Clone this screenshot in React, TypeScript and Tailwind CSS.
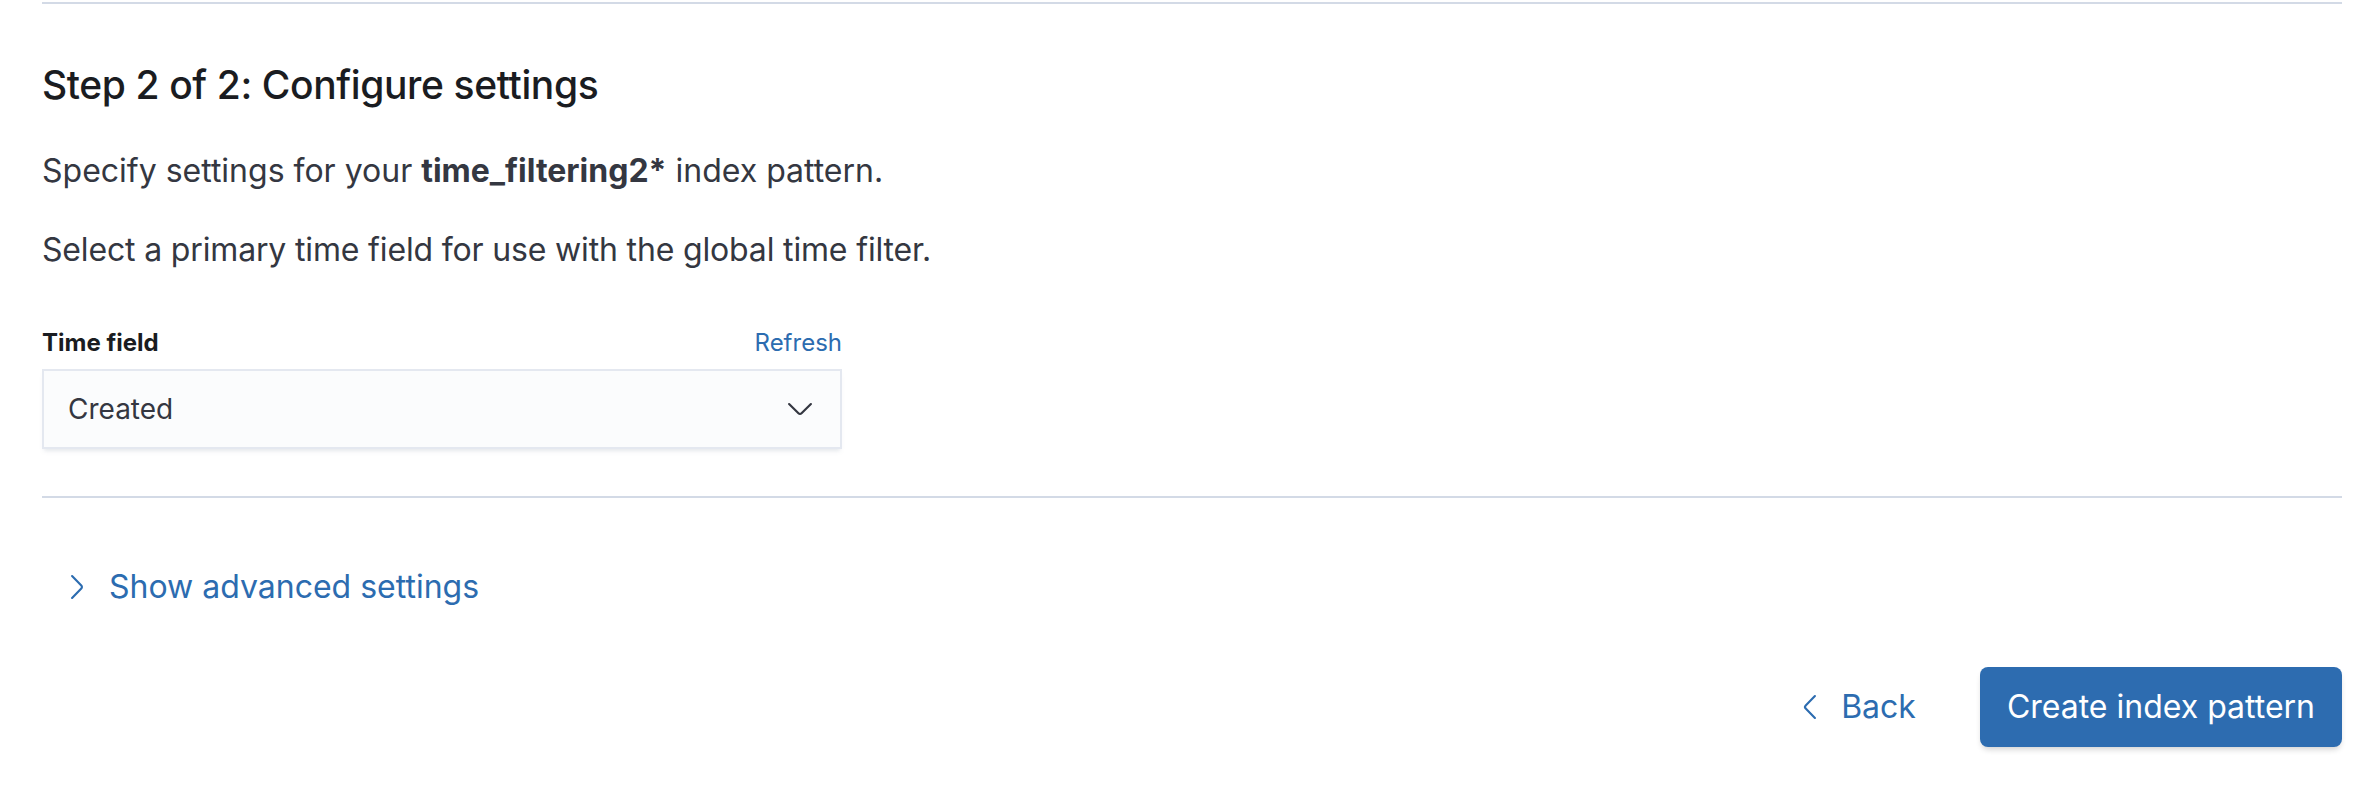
import React from "react";

function ArrowDown({ className }: { className?: string }) {
  return (
    <svg viewBox="0 0 16 16" className={className} fill="currentColor">
      <path d="M13.069 5.157L8.384 9.768a.546.546 0 01-.768 0L2.93 5.158a.552.552 0 00-.771 0 .53.53 0 000 .759l4.684 4.61c.641.631 1.672.63 2.312 0l4.684-4.61a.53.53 0 000-.76.552.552 0 00-.771 0z" />
    </svg>
  );
}

function ArrowRight({ className }: { className?: string }) {
  return (
    <svg viewBox="0 0 16 16" className={className} fill="currentColor">
      <path d="M5.157 13.069l4.611-4.685a.546.546 0 000-.768L5.158 2.93a.552.552 0 010-.771.53.53 0 01.759 0l4.61 4.684c.631.641.63 1.672 0 2.312l-4.61 4.684a.53.53 0 01-.76 0 .552.552 0 010-.771z" />
    </svg>
  );
}

function ArrowLeft({ className }: { className?: string }) {
  return (
    <svg viewBox="0 0 16 16" className={className} fill="currentColor">
      <path d="M10.843 13.069L6.232 8.384a.546.546 0 010-.768l4.61-4.685a.552.552 0 000-.771.53.53 0 00-.759 0l-4.61 4.684a1.65 1.65 0 000 2.312l4.61 4.684a.53.53 0 00.76 0 .552.552 0 000-.771z" />
    </svg>
  );
}

export default function App() {
  return (
    <div className="min-h-screen bg-white font-['Inter',sans-serif] text-[#343741]">
      <div className="pl-[42px] pr-[34px]">
        {/* top divider */}
        <div className="mt-[2px] h-[2px] bg-[#d3dae6]" />

        {/* Step header */}
        <h2 className="mt-[57px] text-[39px] leading-[48px] font-medium text-[#1a1c21] tracking-[-0.01em]">
          Step 2 of 2: Configure settings
        </h2>

        <p className="mt-[38px] text-[32px] leading-[48px]">
          Specify settings for your <strong className="font-bold">time_filtering2*</strong> index pattern.
        </p>
        <p className="mt-[31px] text-[32px] leading-[48px] tracking-[-0.005em]">
          Select a primary time field for use with the global time filter.
        </p>

        {/* Time field */}
        <div className="mt-[53px] w-[800px]">
          <div className="flex items-center justify-between h-[32px]">
            <span className="text-[24px] font-bold text-[#1a1c21]">Time field</span>
            <button className="text-[24px] text-[#2c6cb0]">Refresh</button>
          </div>
          <div className="mt-[10px] h-[80px] flex items-center justify-between pl-[24px] pr-[24px] bg-[#fbfcfd] border-2 border-[#e4e8f0] shadow-[0_4px_4px_-2px_rgba(152,162,179,0.25)]">
            <span className="text-[28px] text-[#343741]">Created</span>
            <ArrowDown className="w-[32px] h-[32px] text-[#343741]" />
          </div>
        </div>

        {/* divider */}
        <div className="mt-[47px] h-[2px] bg-[#d3dae6]" />

        {/* advanced settings */}
        <button className="mt-[69px] flex items-center gap-[16px] pl-[19px] text-[32px] leading-[40px] text-[#2c6cb0]">
          <ArrowRight className="w-[32px] h-[32px]" />
          <span>Show advanced settings</span>
        </button>

        {/* footer actions */}
        <div className="mt-[60px] flex items-center justify-end gap-[64px]">
          <button className="flex items-center gap-[15px] text-[32px] text-[#2c6cb0]">
            <ArrowLeft className="w-[32px] h-[32px]" />
            <span>Back</span>
          </button>
          <button className="h-[80px] px-[27px] rounded-[8px] bg-[#2d6cb0] text-white text-[32px] shadow-[0_4px_6px_-2px_rgba(0,0,0,0.2)]">
            Create index pattern
          </button>
        </div>
      </div>
    </div>
  );
}
